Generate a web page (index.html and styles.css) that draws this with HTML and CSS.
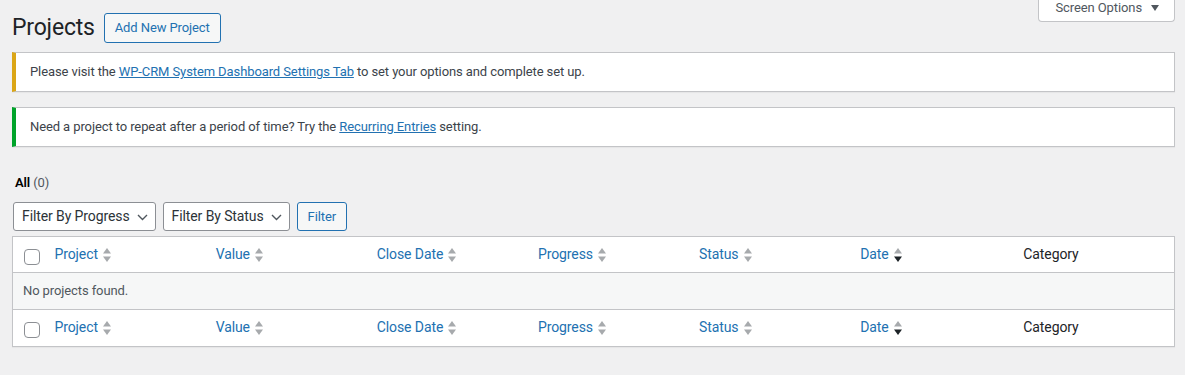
FILE: index.html
```html
<!DOCTYPE html>
<html lang="en">
<head>
<meta charset="utf-8">
<title>Projects</title>
<link rel="stylesheet" href="styles.css">
</head>
<body>
<div class="wrap">
  <div class="screen-meta-links">
    <button class="screen-options" type="button">Screen Options <span class="so-arrow"></span></button>
  </div>
  <div class="title-row">
    <h1 class="page-title">Projects</h1>
    <a class="page-title-action" href="#">Add New Project</a>
  </div>

  <div class="notice notice-warning">
    <p>Please visit the <a href="#">WP-CRM System Dashboard Settings Tab</a> to set your options and complete set up.</p>
  </div>
  <div class="notice notice-success">
    <p>Need a project to repeat after a period of time? Try the <a href="#">Recurring Entries</a> setting.</p>
  </div>

  <ul class="subsubsub">
    <li><strong class="current">All</strong> <span class="count">(0)</span></li>
  </ul>

  <div class="tablenav">
    <div class="select">Filter By Progress
      <svg class="chev" width="11" height="7" viewBox="0 0 11 7"><path d="M1 1l4.5 4.5L10 1" fill="none" stroke="#50575e" stroke-width="1.4"/></svg>
    </div>
    <div class="select">Filter By Status
      <svg class="chev" width="11" height="7" viewBox="0 0 11 7"><path d="M1 1l4.5 4.5L10 1" fill="none" stroke="#50575e" stroke-width="1.4"/></svg>
    </div>
    <button class="button" type="button">Filter</button>
  </div>

  <table class="widefat">
    <colgroup>
      <col class="c-check">
      <col><col><col><col><col><col><col>
    </colgroup>
    <thead>
      <tr>
        <td class="check-column"><span class="cb"></span></td>
        <th class="sortable"><a href="#">Project <svg class="sort" width="10" height="16" viewBox="0 0 10 16"><path d="M5 1L9 6.5H1z" fill="#a7aaad"/><path d="M1 9.5H9L5 15z" fill="#a7aaad"/></svg></a></th>
        <th class="sortable"><a href="#">Value <svg class="sort" width="10" height="16" viewBox="0 0 10 16"><path d="M5 1L9 6.5H1z" fill="#a7aaad"/><path d="M1 9.5H9L5 15z" fill="#a7aaad"/></svg></a></th>
        <th class="sortable"><a href="#">Close Date <svg class="sort" width="10" height="16" viewBox="0 0 10 16"><path d="M5 1L9 6.5H1z" fill="#a7aaad"/><path d="M1 9.5H9L5 15z" fill="#a7aaad"/></svg></a></th>
        <th class="sortable"><a href="#">Progress <svg class="sort" width="10" height="16" viewBox="0 0 10 16"><path d="M5 1L9 6.5H1z" fill="#a7aaad"/><path d="M1 9.5H9L5 15z" fill="#a7aaad"/></svg></a></th>
        <th class="sortable"><a href="#">Status <svg class="sort" width="10" height="16" viewBox="0 0 10 16"><path d="M5 1L9 6.5H1z" fill="#a7aaad"/><path d="M1 9.5H9L5 15z" fill="#a7aaad"/></svg></a></th>
        <th class="sortable"><a href="#">Date <svg class="sort" width="10" height="16" viewBox="0 0 10 16"><path d="M5 1L9 6.5H1z" fill="#a7aaad"/><path d="M1 9.5H9L5 15z" fill="#1d2327"/></svg></a></th>
        <th class="plain">Category</th>
      </tr>
    </thead>
    <tbody>
      <tr class="no-items">
        <td colspan="8">No projects found.</td>
      </tr>
    </tbody>
    <tfoot>
      <tr>
        <td class="check-column"><span class="cb"></span></td>
        <th class="sortable"><a href="#">Project <svg class="sort" width="10" height="16" viewBox="0 0 10 16"><path d="M5 1L9 6.5H1z" fill="#a7aaad"/><path d="M1 9.5H9L5 15z" fill="#a7aaad"/></svg></a></th>
        <th class="sortable"><a href="#">Value <svg class="sort" width="10" height="16" viewBox="0 0 10 16"><path d="M5 1L9 6.5H1z" fill="#a7aaad"/><path d="M1 9.5H9L5 15z" fill="#a7aaad"/></svg></a></th>
        <th class="sortable"><a href="#">Close Date <svg class="sort" width="10" height="16" viewBox="0 0 10 16"><path d="M5 1L9 6.5H1z" fill="#a7aaad"/><path d="M1 9.5H9L5 15z" fill="#a7aaad"/></svg></a></th>
        <th class="sortable"><a href="#">Progress <svg class="sort" width="10" height="16" viewBox="0 0 10 16"><path d="M5 1L9 6.5H1z" fill="#a7aaad"/><path d="M1 9.5H9L5 15z" fill="#a7aaad"/></svg></a></th>
        <th class="sortable"><a href="#">Status <svg class="sort" width="10" height="16" viewBox="0 0 10 16"><path d="M5 1L9 6.5H1z" fill="#a7aaad"/><path d="M1 9.5H9L5 15z" fill="#a7aaad"/></svg></a></th>
        <th class="sortable"><a href="#">Date <svg class="sort" width="10" height="16" viewBox="0 0 10 16"><path d="M5 1L9 6.5H1z" fill="#a7aaad"/><path d="M1 9.5H9L5 15z" fill="#1d2327"/></svg></a></th>
        <th class="plain">Category</th>
      </tr>
    </tfoot>
  </table>
</div>
</body>
</html>
```

FILE: styles.css
```css
* { box-sizing: border-box; }

html, body {
  margin: 0;
  padding: 0;
  background: #f0f0f1;
}

body {
  font-family: Roboto, "Liberation Sans", Arial, sans-serif;
  font-size: 13px;
  line-height: 1.4;
  letter-spacing: -0.1px;
  color: #3c434a;
}

a { color: #2271b1; }

.wrap {
  margin: 0 10px 0 12px;
  height: 375px;
}

.screen-meta-links {
  float: right;
}

.screen-options {
  display: flex;
  align-items: center;
  gap: 9px;
  height: 29px;
  margin-top: -7px;
  padding: 0 15px 0 16px;
  background: #fff;
  border: 1px solid #c3c4c7;
  border-top: none;
  border-radius: 0 0 4px 4px;
  font-family: inherit;
  font-size: 13px;
  letter-spacing: -0.1px;
  color: #50575e;
  cursor: pointer;
}

.so-arrow {
  width: 0;
  height: 0;
  border-left: 4.5px solid transparent;
  border-right: 4.5px solid transparent;
  border-top: 6px solid #50575e;
  margin-top: 1px;
}

.title-row {
  display: flex;
  align-items: center;
  gap: 9px;
  padding-top: 13px;
  height: 43px;
}

.page-title {
  margin: 0;
  font-size: 23px;
  font-weight: 400;
  line-height: 30px;
  letter-spacing: -0.2px;
  color: #1d2327;
}

.page-title-action {
  display: inline-flex;
  align-items: center;
  height: 30px;
  padding: 0 10px;
  border: 1px solid #2271b1;
  border-radius: 3px;
  background: #f6f7f7;
  color: #2271b1;
  text-decoration: none;
  font-size: 13px;
}

.notice {
  clear: both;
  background: #fff;
  border: 1px solid #c3c4c7;
  border-left-width: 4px;
  box-shadow: 0 1px 1px rgba(0, 0, 0, 0.04);
  padding: 1px 12px;
  height: 40px;
  display: flex;
  align-items: center;
}

.notice p {
  margin: 0;
  padding: 2px;
  font-size: 13px;
  line-height: 1.5;
  color: #3c434a;
}

.notice-warning {
  margin-top: 9px;
  border-left-color: #dba617;
}

.notice-success {
  margin-top: 15px;
  border-left-color: #00a32a;
}

.subsubsub {
  list-style: none;
  margin: 23px 0 0 3px;
  padding: 0;
  line-height: 26px;
  height: 26px;
  font-size: 13px;
  color: #646970;
}

.subsubsub .current {
  color: #000;
  font-weight: 600;
}

.subsubsub .count {
  color: #50575e;
}

.tablenav {
  display: flex;
  gap: 7px;
  margin: 6px 0 5px 1px;
  height: 29px;
}

.select {
  display: flex;
  align-items: center;
  gap: 7px;
  height: 29px;
  padding: 0 7px 0 8px;
  background: #fff;
  border: 1px solid #8c8f94;
  border-radius: 3px;
  font-size: 14px;
  color: #2c3338;
}

.chev { margin-top: 1px; }

.button {
  height: 29px;
  padding: 0 10px;
  background: #f6f7f7;
  border: 1px solid #2271b1;
  border-radius: 3px;
  color: #2271b1;
  font-family: inherit;
  font-size: 13px;
  letter-spacing: -0.1px;
}

.widefat {
  width: 100%;
  table-layout: fixed;
  border-collapse: collapse;
  border: 1px solid #c3c4c7;
  background: #fff;
  box-shadow: 0 1px 1px rgba(0, 0, 0, 0.04);
}

.c-check { width: 34px; }

.widefat th,
.widefat td {
  padding: 0;
  text-align: left;
  font-weight: 400;
  font-size: 14px;
  vertical-align: middle;
}

.widefat thead tr { height: 36px; border-bottom: 1px solid #c3c4c7; }
.widefat tfoot tr { height: 37px; border-top: 1px solid #c3c4c7; }
.widefat tbody tr { height: 37px; }

.check-column {
  padding-left: 11px !important;
  padding-top: 4px !important;
}

.cb {
  display: block;
  width: 16px;
  height: 16px;
  border: 1px solid #8c8f94;
  border-radius: 4px;
  background: #fff;
}

.sortable a {
  display: flex;
  align-items: center;
  gap: 4px;
  padding: 0 8px;
  text-decoration: none;
  color: #2271b1;
  white-space: nowrap;
}

.sort { display: block; }

.plain {
  padding-left: 10px !important;
  color: #1d2327;
}

.no-items td {
  background: #f6f7f7;
  padding-left: 10px !important;
  font-size: 13px;
  color: #50575e;
}
```
